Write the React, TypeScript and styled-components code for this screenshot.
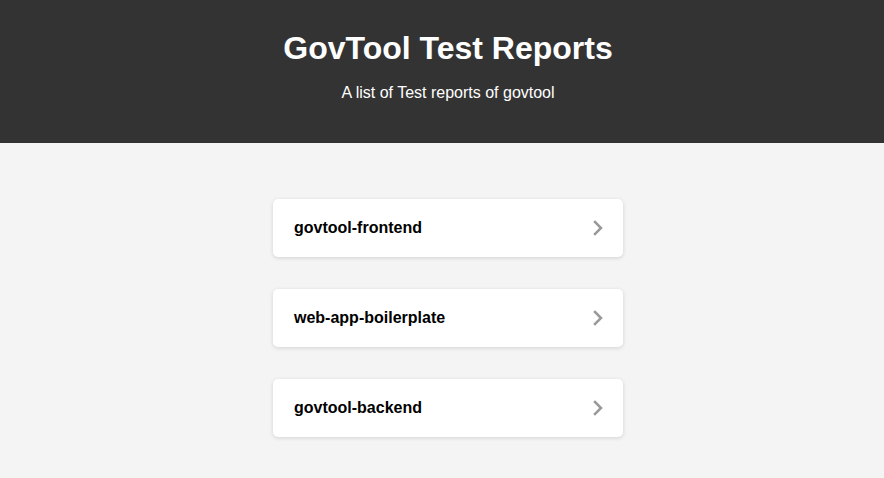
import styled, { createGlobalStyle } from 'styled-components';

const reports = ['govtool-frontend', 'web-app-boilerplate', 'govtool-backend'];

const GlobalStyle = createGlobalStyle`
  html, body {
    margin: 0;
    padding: 0;
    background-color: #f4f4f4;
    font-family: 'Liberation Sans', Arial, sans-serif;
  }
`;

const Chevron = () => (
  <svg width="10" height="16" viewBox="0 0 10 16" fill="none">
    <path d="M2 2 L8 8 L2 14" stroke="#999" strokeWidth="2.5" strokeLinecap="square" />
  </svg>
);

export default function App() {
  return (
    <>
      <GlobalStyle />
      <Header>
        <Title>GovTool Test Reports</Title>
        <SubTitle>A list of Test reports of govtool</SubTitle>
      </Header>
      <List>
        {reports.map((name) => (
          <Card key={name} href="#">
            <CardTitle>{name}</CardTitle>
            <Chevron />
          </Card>
        ))}
      </List>
    </>
  );
}

const Header = styled.header`
  background-color: #333333;
  color: white;
  text-align: center;
  padding: 30px 0 41px 12px;
`;
const Title = styled.h1`
  font-size: 32px;
  font-weight: 700;
  margin: 0 0 17px 0;
`;
const SubTitle = styled.p`
  font-size: 16px;
  margin: 0;
`;
const List = styled.main`
  display: flex;
  flex-direction: column;
  align-items: center;
  gap: 32px;
  padding: 56px 0 41px 12px;
`;
const Card = styled.a`
  box-sizing: border-box;
  width: 350px;
  display: flex;
  align-items: center;
  justify-content: space-between;
  padding: 21px 20px 21px 21px;
  background-color: white;
  border-radius: 5px;
  box-shadow: 0 1px 4px rgba(0, 0, 0, 0.14);
  text-decoration: none;
  color: #000;
`;
const CardTitle = styled.span`
  font-size: 16px;
  font-weight: 700;
  line-height: 16px;
`;
